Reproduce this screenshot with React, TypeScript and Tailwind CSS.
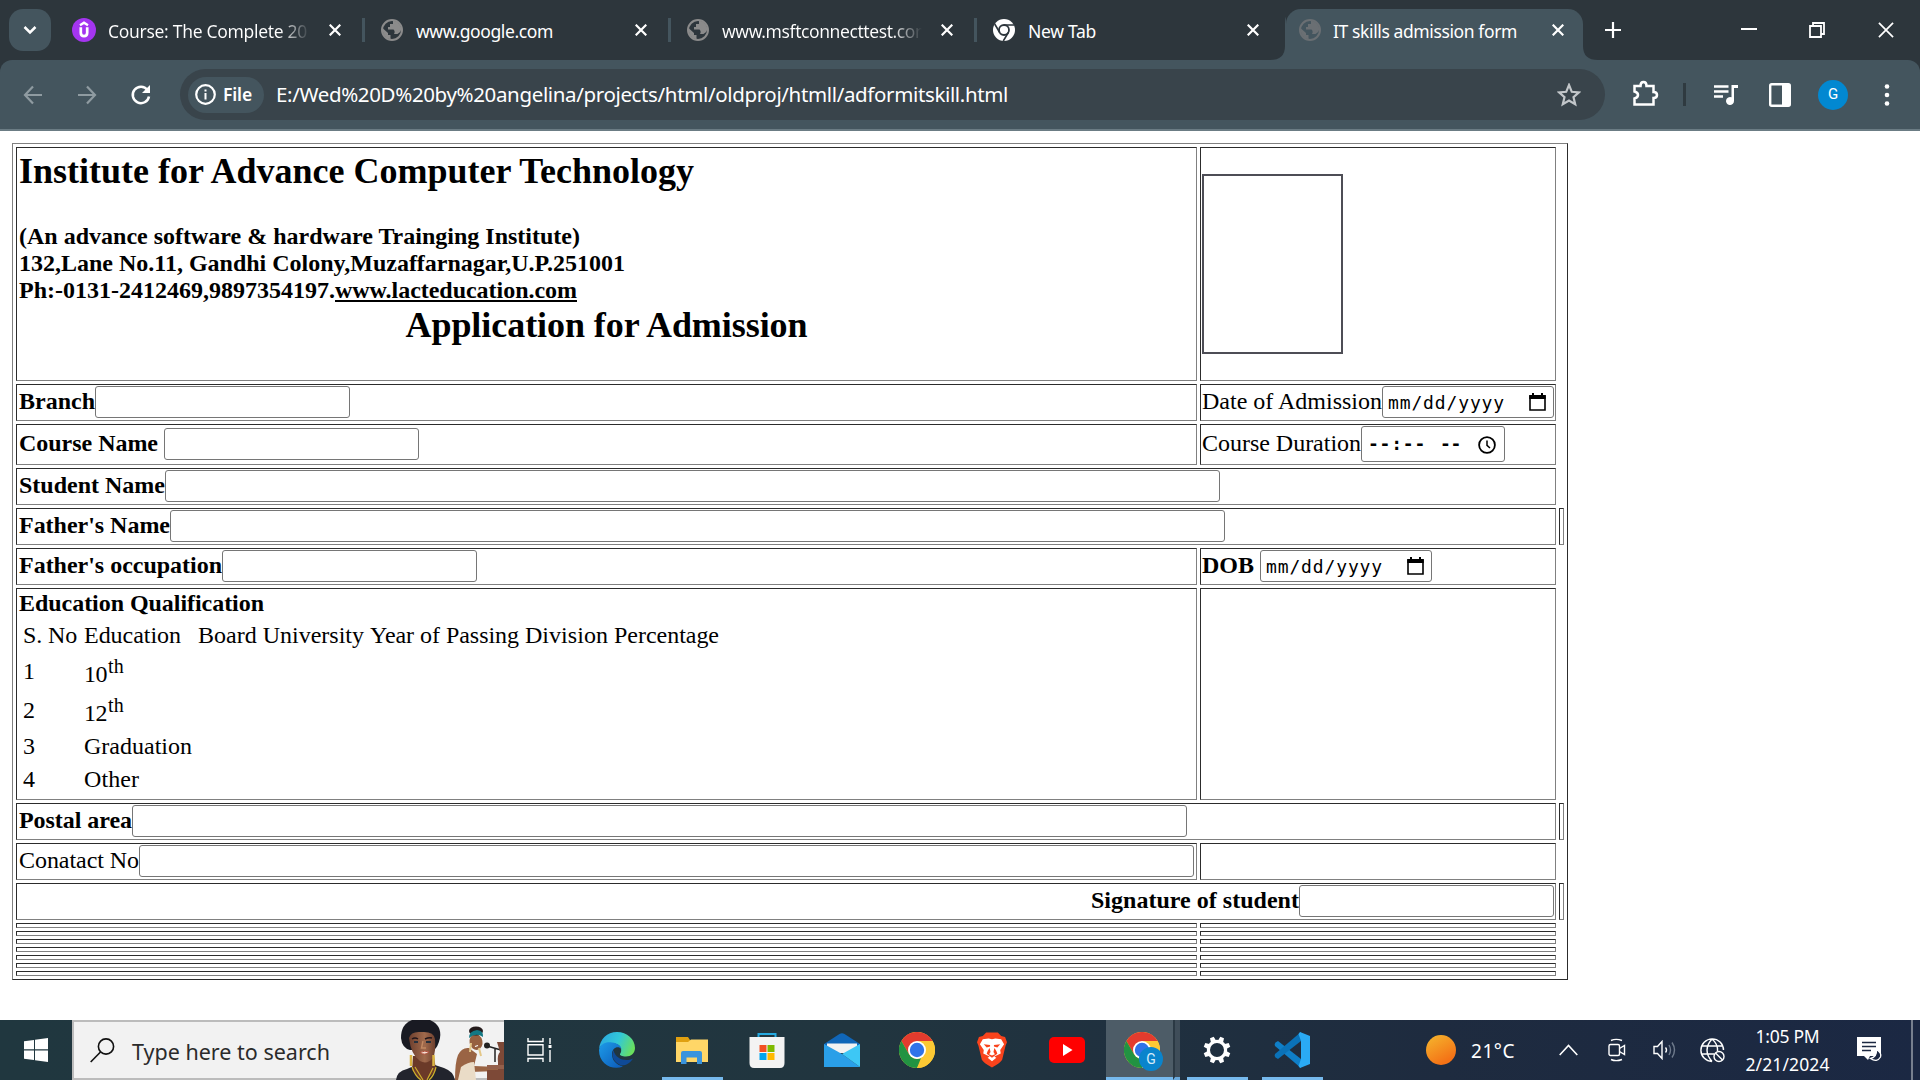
import { useLayoutEffect, useRef, useState, type ReactNode } from "react";

/** Text whose tracking is adjusted so that it spans exactly `w` pixels. */
function Fit({ w, children, className = "" }: { w: number; children: string; className?: string }) {
  const ref = useRef<HTMLSpanElement>(null);
  const [spacing, setSpacing] = useState(0);
  useLayoutEffect(() => {
    if (ref.current) {
      setSpacing((w - ref.current.getBoundingClientRect().width) / children.length);
    }
  }, [w, children]);
  return (
    <span ref={ref} className={`inline-block shrink-0 whitespace-pre ${className}`} style={{ letterSpacing: spacing }}>
      {children}
    </span>
  );
}

/* ---------- icons ---------- */

function GlobeIcon({ color }: { color: string }) {
  return (
    <svg width="22" height="22" viewBox="0 0 22 22">
      <circle cx="11" cy="11" r="10" fill="none" stroke={color} strokeWidth="2" />
      <path d="M12 1.500 V5 H9 V8 H7 V10.500 H12.500 Q14.500 12.500 13 15 H16.500 Q20 13 20.500 10 Q19 3 12 1.500 Z M2 9.500 L7 14 V16 H9.500 V20.500 Q2 18.500 1.500 10 Z" fill={color} />
    </svg>
  );
}

function CloseIcon({ size = 12, stroke = 2.2 }: { size?: number; stroke?: number }) {
  return (
    <svg width={size} height={size} viewBox="0 0 12 12" className="shrink-0">
      <path d="M.7 .7 L11.300 11.300 M11.300 .7 L.7 11.300" stroke="#fff" strokeWidth={stroke} />
    </svg>
  );
}

function UdemyIcon() {
  return (
    <svg width="24" height="24" viewBox="0 0 24 24">
      <circle cx="12" cy="12" r="12" fill="#a435f0" />
      <path d="M8 7.300 L12 4.700 L16 7.300" fill="none" stroke="#fff" strokeWidth="2.300" />
      <path d="M8.800 9.300 V14.800 Q8.800 18.200 12 18.200 Q15.200 18.200 15.200 14.800 V9.300" fill="none" stroke="#fff" strokeWidth="2.700" />
    </svg>
  );
}

function ChromeMono() {
  return (
    <svg width="22" height="22" viewBox="0 0 22 22">
      <circle cx="11" cy="11" r="11" fill="#fff" />
      <circle cx="11" cy="11" r="5" fill="none" stroke="#2d363c" strokeWidth="1.800" />
      <path d="M11 6 H21 M6.700 13.500 L1.700 5 M15.300 13.500 L10.300 22" stroke="#2d363c" strokeWidth="1.600" />
    </svg>
  );
}

function ChromeIcon() {
  return (
    <svg width="36" height="36" viewBox="0 0 36 36">
      <circle cx="18" cy="18" r="18" fill="#fcc934" />
      <path d="M18 18 L2.400 9 A18 18 0 0 1 33.600 9 Z" fill="#e33b2e" />
      <path d="M2.400 9 L10.200 22.500 L18 9 Z" fill="#e33b2e" />
      <path d="M2.400 9 L10.200 22.500 A9 9 0 0 0 22 26 L18 36 A18 18 0 0 1 2.400 9" fill="#229342" />
      <path d="M18 9 H33.600 A18 18 0 0 1 18 36 L25.800 22.500 Z" fill="#fcc934" />
      <circle cx="18" cy="18" r="9" fill="#fff" />
      <circle cx="18" cy="18" r="7.200" fill="#2f73e8" />
    </svg>
  );
}

function EdgeIcon() {
  return (
    <svg width="36" height="36" viewBox="0 0 36 36">
      <defs>
        <linearGradient id="edgeTop" x1="0" y1=".3" x2="1" y2=".6">
          <stop offset="0" stopColor="#2aa8e0" />
          <stop offset=".5" stopColor="#32c8d8" />
          <stop offset="1" stopColor="#6be05a" />
        </linearGradient>
        <linearGradient id="edgeLow" x1="0" y1="0" x2="1" y2="1">
          <stop offset="0" stopColor="#1d9be8" />
          <stop offset="1" stopColor="#0c59b8" />
        </linearGradient>
      </defs>
      <path d="M0 17 C1 7 8 0 18 0 C28 0 36 7 36 16 C36 21 32 24.500 27 24.500 C23 24.500 20.500 23.200 21 22 C23.500 19 22.500 13 16 11.500 C9 10 2 13 0 17 Z" fill="url(#edgeTop)" />
      <path d="M0 18 C1 12 7 9.500 13 10.500 C19 11.200 22 14 22.500 17 C19 13 13 16 13 22 C13 29 18 33 24 34.500 C14 38.500 0 33 0 18 Z" fill="url(#edgeLow)" />
      <path d="M14.500 18 C11.500 24 15 31 22.500 33.500 C28 33.500 32 30 34 26.500 C27 30 16.500 27.500 14.500 18 Z" fill="#0f4a97" />
    </svg>
  );
}

function ExplorerIcon() {
  return (
    <svg width="34" height="28" viewBox="0 0 34 28">
      <path d="M1 1 H13 L15 4 V8 H1 Z" fill="#e0a010" />
      <path d="M1 6 H13 L16 3.500 H33 V26 H1 Z" fill="#ffd667" />
      <path d="M6 28 V17 Q6 15 8 15 H25 Q27 15 27 17 V28 H22 V21.500 H11.500 V28 Z" fill="#3a94dd" />
    </svg>
  );
}

function StoreIcon() {
  return (
    <svg width="36" height="36" viewBox="0 0 36 36">
      <path d="M9.500 7 V2 H26.500 V7" fill="none" stroke="#25a9e0" strokeWidth="2" />
      <path d="M.5 5 H35.500 V31 Q35.500 36 31 36 H5 Q.5 36 .5 31 Z" fill="#f3f3f3" />
      <path d="M10.500 13 H17.500 V20 H10.500 Z" fill="#f25022" />
      <path d="M18.500 13 H25.500 V20 H18.500 Z" fill="#7fba00" />
      <path d="M10.500 21 H17.500 V28 H10.500 Z" fill="#00a4ef" />
      <path d="M18.500 21 H25.500 V28 H18.500 Z" fill="#ffb900" />
    </svg>
  );
}

function MailIcon() {
  return (
    <svg width="36" height="34" viewBox="0 0 36 34">
      <path d="M0 11 L15.500 1 Q18 -.5 20.500 1 L36 11 V15 H0 Z" fill="#1066b8" />
      <path d="M3 10.500 H33 V20 H3 Z" fill="#f2f2f2" />
      <path d="M0 11 L18 21 L36 34 H0 Z" fill="#2a9fe8" />
      <path d="M36 11 L18 21 L36 34 Z" fill="#3dc7f5" />
    </svg>
  );
}

function BraveIcon() {
  return (
    <svg width="30" height="36" viewBox="0 0 31 36">
      <path d="M9.500 0 H21.500 L25 3.500 L29 4.500 L31 10 L29.500 13.500 L26 28 Q24.500 31 15.500 36 Q6.500 31 5 28 L1.500 13.500 L0 10 L2 4.500 L6 3.500 Z" fill="#f9431c" />
      <path d="M6 7 L12 6 L15.500 7 L19 6 L25 7 L28 12 L24 18 L24.500 21.500 L18.500 24.500 L15.500 26.500 L12.500 24.500 L6.500 21.500 L7 18 L3 12 Z M11 26 L15.500 23.500 L20 26 L15.500 29.500 Z" fill="#fff" />
      <path d="M7 12 L13.500 12.800 L13.500 14.500 L10 15.500 Z M24 12 L17.500 12.800 L17.500 14.500 L21 15.500 Z M13 16 L14 20 L12.500 22.500 L15.500 23.800 L18.500 22.500 L17 20 L18 16 L20 19 L21 22 L15.500 26 L10 22 L11 19 Z" fill="#f9431c" />
    </svg>
  );
}

function YouTubeIcon() {
  return (
    <svg width="36" height="26" viewBox="0 0 36 26">
      <rect width="36" height="26" rx="5" fill="#f00" />
      <path d="M14 7 L23.500 13 L14 19 Z" fill="#fff" />
    </svg>
  );
}

function GearIcon() {
  return (
    <svg width="28" height="28" viewBox="-14 -14 28 28">
      {[0, 45, 90, 135, 180, 225, 270, 315].map((a) => (
        <path key={a} d="M-2.800 -8.500 L-2 -13.500 H2 L2.800 -8.500 Z" fill="#fff" transform={`rotate(${a + 22.5})`} />
      ))}
      <circle r="8.600" fill="none" stroke="#fff" strokeWidth="3.200" />
    </svg>
  );
}

function VsCodeIcon() {
  return (
    <svg width="36" height="36" viewBox="0 0 36 36">
      <path d="M1.500 10.500 L4 9 L27 27 V36 L1 14 Q0 12 1.500 10.500 Z" fill="#0f7fc8" />
      <path d="M1.500 25.500 L4 27 L27 9 V0 L1 22 Q0 24 1.500 25.500 Z" fill="#0a72b8" />
      <path d="M26 0 L36 4 V32 L26 36 L24.500 34 L27 27 V9 L24.500 2 Z" fill="#2aaaf4" />
    </svg>
  );
}

function SearchArt() {
  return (
    <svg width="108" height="60" viewBox="396 1020 108 60">
      <defs>
        <linearGradient id="face" x1="0" y1="0" x2="1" y2="0">
          <stop offset="0" stopColor="#6d3f2e" />
          <stop offset=".6" stopColor="#a06a4c" />
          <stop offset="1" stopColor="#6d3f2e" />
        </linearGradient>
      </defs>
      <path d="M396 1080 Q397 1071 407 1069 L416 1065 H435 L444 1068 Q453 1071 455 1080 Z" fill="#22242d" />
      <path d="M413 1056 H434 L436 1070 L427 1080 H421 L412 1070 Z" fill="#6b3a28" />
      <path d="M401 1038 Q401 1024 412 1020 H430 Q442 1025 440 1038 Q438 1047 434 1050 H410 Q402 1048 401 1038 Z" fill="#191a22" />
      <path d="M409 1038 Q411 1031 421 1032 Q434 1031 435 1039 Q436 1052 433 1058 Q427 1065 420 1061 Q411 1055 409 1038 Z" fill="url(#face)" />
      <path d="M412 1039 Q415 1037 418 1039 M425 1039 Q429 1037 432 1038" stroke="#20151a" strokeWidth="1.500" fill="none" />
      <path d="M414 1042 H418 M426 1042 H431" stroke="#26303c" strokeWidth="1.800" />
      <path d="M423 1041 L421.500 1048 H426" stroke="#c28962" strokeWidth="1.400" fill="none" />
      <path d="M420 1052.500 Q425 1050 429 1052 Q425 1056 420 1052.500 Z" fill="#f4dfd2" stroke="#b0503d" />
      <path d="M411 1055 V1066 M433.500 1055 V1066" stroke="#dbb544" strokeWidth="2.500" />
      <path d="M412 1067 Q415 1076 421 1080 M436 1067 Q434 1076 429 1080 M415 1067 L423 1080 M433 1068 L427 1080" stroke="#ceb02c" strokeWidth="1.200" fill="none" />
      <path d="M455 1080 Q455 1062 458 1055 Q462 1047 469 1048 L477 1054 L474 1066 L498 1067 V1071 L470 1072 L466 1080 Z" fill="#9a6444" />
      <path d="M458 1080 L461 1067 Q468 1062 474 1062 L476 1080 Z" fill="#eadcc7" />
      <ellipse cx="476" cy="1042" rx="6.500" ry="8" fill="#96603f" transform="rotate(-12 476 1042)" />
      <ellipse cx="476" cy="1031" rx="7" ry="4.500" fill="#241b1c" />
      <path d="M469 1038 Q469 1031 477 1030 Q484 1031 483 1037 Q476 1032 469 1038 Z" fill="#137883" />
      <path d="M471 1043 L470 1052 M479 1048 L481 1056" stroke="#e4c787" strokeWidth="2" />
      <path d="M475 1046.500 L478 1045.500" stroke="#fff" strokeWidth="1.300" />
      <path d="M487 1046 L501 1050 M495 1048 V1062" stroke="#222" strokeWidth="1.500" />
      <circle cx="487" cy="1045.500" r="3" fill="#222" />
      <path d="M497 1042 H504 V1080 H487 V1070 H498 V1062 Q497 1055 500 1052 Z" fill="#7d4937" />
      <path d="M487 1065 H504 V1069 H487 Z" fill="#94604b" />
    </svg>
  );
}

/* ---------- browser ---------- */

function Tab({ icon, close, children }: { icon: ReactNode; close?: boolean; children: ReactNode }) {
  return (
    <div className="flex h-[60px] w-[306px] shrink-0 items-center">
      <span className="flex w-[24px] shrink-0 justify-center">{icon}</span>
      <span className="ml-[12px] w-[202px] shrink-0 overflow-hidden pt-[1px] leading-[28px]">{children}</span>
      <span className="ml-[19px]"><CloseIcon /></span>
      {!close && <span className="ml-[21px] h-6 w-[3px] bg-[#44555e]" />}
    </div>
  );
}

function TabStrip() {
  return (
    <div className="flex h-[60px] bg-[#2d363c] text-[17.5px] text-white">
      <div className="ml-[9px] mt-[9px] flex h-[42px] w-[42px] shrink-0 items-center justify-center rounded-[14px] bg-[#44555e]">
        <svg width="14" height="10" viewBox="0 0 14 10"><path d="M1.500 2 L7 7.500 L12.500 2" fill="none" stroke="#fff" strokeWidth="2.500" /></svg>
      </div>
      <div className="ml-[21px] flex w-[1199px] shrink-0 overflow-hidden">
        <Tab icon={<UdemyIcon />}>
          <span className="block w-[202px] overflow-hidden bg-[linear-gradient(to_right,#fff_85%,#2d363c)] bg-clip-text text-transparent">
            <Fit w={199}>Course: The Complete 20</Fit>
          </span>
        </Tab>
        <Tab icon={<span className="ml-[3px]"><GlobeIcon color="#8b8b8b" /></span>}><Fit w={137} className="ml-[2px]">www.google.com</Fit></Tab>
        <Tab icon={<span className="ml-[3px]"><GlobeIcon color="#8b8b8b" /></span>}>
          <span className="block w-[202px] overflow-hidden bg-[linear-gradient(to_right,#fff_85%,#2d363c)] bg-clip-text text-transparent">
            <Fit w={209} className="ml-[2px]">www.msftconnecttest.com</Fit>
          </span>
        </Tab>
        <Tab icon={<span className="ml-[3px]"><ChromeMono /></span>} close><Fit w={68} className="ml-[2px]">New Tab</Fit></Tab>
      </div>
      <svg width="16" height="60" viewBox="0 0 16 60" className="-ml-px shrink-0"><path d="M0 60 Q15 60 15 46 V24 Q15 18 16 17 V60 Z" fill="#44555e" /></svg>
      <div className="mt-[9px] flex h-[51px] w-[297px] shrink-0 items-center rounded-t-[15px] bg-[#44555e] pb-[9px]">
        <span className="ml-[13px]"><GlobeIcon color="#6a6f73" /></span>
        <Fit w={184} className="ml-[12px] mt-[2px] leading-[28px]">IT skills admission form</Fit>
        <span className="ml-[35px]"><CloseIcon /></span>
      </div>
      <svg width="15" height="60" viewBox="0 0 15 60" className="shrink-0"><path d="M15 60 Q0 60 0 46 V60 Z" fill="#44555e" /></svg>
      <div className="flex flex-1 items-center">
        <svg width="16" height="16" viewBox="0 0 16 16" className="ml-[7px]"><path d="M8 0 V16 M0 8 H16" stroke="#fff" strokeWidth="2.200" /></svg>
        <svg width="16" height="16" viewBox="0 0 16 16" className="ml-[120px]"><path d="M0 7 H16" stroke="#fff" strokeWidth="2" /></svg>
        <svg width="16" height="16" viewBox="0 0 16 16" className="ml-[52px]"><path d="M1 4 H12 V15 H1 Z M4 4 V1 H15 V12 H12" fill="none" stroke="#fff" strokeWidth="1.800" /></svg>
        <span className="ml-[53px]"><CloseIcon size={16} stroke={1.3} /></span>
      </div>
    </div>
  );
}

function Toolbar() {
  return (
    <div className="h-[71px] border-b-2 border-[#6b7c84] bg-[#2d363c]">
      <div className="flex h-[69px] items-center rounded-t-[12px] bg-[#44555e]">
        <svg width="20" height="20" viewBox="0 0 20 20" className="ml-[23px]"><path d="M10 1.500 L2 10 L10 18.500 M2 10 H19" fill="none" stroke="#8f9ba1" strokeWidth="2.200" /></svg>
        <svg width="20" height="20" viewBox="0 0 20 20" className="ml-[34px]"><path d="M10 1.500 L18 10 L10 18.500 M18 10 H1" fill="none" stroke="#8f9ba1" strokeWidth="2.200" /></svg>
        <svg width="22" height="22" viewBox="0 0 22 22" className="ml-[33px]"><path d="M17.500 6 A8.200 8.200 0 1 0 19 12.500" fill="none" stroke="#fff" strokeWidth="2.500" /><path d="M20 1 V9 H12 Z" fill="#fff" /></svg>
        <div className="ml-[28px] flex h-[51px] w-[1425px] shrink-0 items-center rounded-full bg-[#39444b] pl-[8px] text-white">
          <div className="flex h-[36px] w-[76px] shrink-0 items-center rounded-full bg-[#44555e] pl-[7px]">
            <svg width="21" height="21" viewBox="0 0 21 21"><circle cx="10.500" cy="10.500" r="9.300" fill="none" stroke="#fff" strokeWidth="2.200" /><path d="M10.500 9 V15.500 M10.500 5.500 V7.500" stroke="#fff" strokeWidth="2" /></svg>
            <Fit w={29} className="ml-[7px] text-[17.5px] font-semibold">File</Fit>
          </div>
          <Fit w={732} className="ml-[12px] text-[20.5px]">E:/Wed%20D%20by%20angelina/projects/html/oldproj/htmll/adformitskill.html</Fit>
          <svg width="24" height="24" viewBox="0 0 24 24" className="ml-auto mr-[24px]"><path d="M12 2 L14.800 8.800 L22 9.400 L16.500 14.200 L18.200 21.300 L12 17.500 L5.800 21.300 L7.500 14.200 L2 9.400 L9.200 8.800 Z" fill="none" stroke="#c2c6c9" strokeWidth="2.200" /></svg>
        </div>
        <svg width="27" height="27" viewBox="0 0 27 27" className="-mt-[2px] ml-[27px]"><path d="M2.500 6 H8.500 Q8.500 2 11.500 2 Q14.500 2 14.500 6 H21.500 V12 Q25 12 25 15 Q25 18 21.500 18 V24.500 H2.500 V18.500 Q6 17.500 6 15 Q6 12.500 2.500 11.500 Z" fill="none" stroke="#fff" strokeWidth="2.500" /></svg>
        <div className="ml-[24px] h-[23px] w-[3px] bg-[#2f3a40]" />
        <svg width="24" height="24" viewBox="0 0 24 24" className="ml-[28px]"><path d="M0 3.500 H14.500 M0 8.500 H14.500 M0 13.500 H9" stroke="#fff" strokeWidth="2.300" /><path d="M24 2 V5 H20 V18 A4 4 0 1 1 17.500 14.300 V2 Z" fill="#fff" /></svg>
        <svg width="22" height="24" viewBox="0 0 22 24" className="ml-[31px]"><rect x="1.200" y="1.200" width="19.600" height="21.600" rx="1.500" fill="none" stroke="#fff" strokeWidth="2.400" /><path d="M13 1 H21 V23 H13 Z" fill="#fff" /></svg>
        <div className="ml-[27px] flex h-[30px] w-[30px] items-center justify-center rounded-full bg-[#0288d1] font-[Roboto] text-[15px] text-white">G</div>
        <svg width="6" height="24" viewBox="0 0 6 24" className="ml-[36px]"><circle cx="3" cy="3.500" r="2.300" fill="#fff" /><circle cx="3" cy="12" r="2.300" fill="#fff" /><circle cx="3" cy="20.500" r="2.300" fill="#fff" /></svg>
      </div>
    </div>
  );
}

/* ---------- form ---------- */

const cell = "flex items-start border border-t-[#2c2c2c] border-l-[#2c2c2c] border-b-[#808080] border-r-[#808080] pl-px leading-[32px] overflow-hidden";

function Box({ className }: { className: string }) {
  return <div className={`h-8 shrink-0 rounded-[3px] border border-[#767676] bg-white ${className}`} />;
}

function DateBox({ className = "" }: { className?: string }) {
  return (
    <div className={`mt-px flex h-8 w-[172px] shrink-0 items-center rounded-[3px] border border-[#767676] pl-[5px] pr-[7px] font-['DejaVu_Sans_Mono',monospace] text-[18px] ${className}`}>
      <Fit w={117} className="mt-px">mm/dd/yyyy</Fit>
      <svg width="17" height="18" viewBox="0 0 17 18" className="ml-auto"><path d="M1 3 H16 V17 H1 Z" fill="none" stroke="#000" strokeWidth="1.600" /><path d="M.3 2 H16.700 V6 H.3 Z M3 0 H5 V3 H3 Z M12 0 H14 V3 H12 Z" /></svg>
    </div>
  );
}

function Education() {
  const rows: [string, ReactNode, string][] = [
    ["1", <Fit key="a" w={23}>10</Fit>, "h-[39px]"],
    ["2", <Fit key="b" w={23}>12</Fit>, "h-[36px]"],
    ["3", <Fit key="c" w={108}>Graduation</Fit>, "h-[33px]"],
    ["4", <Fit key="d" w={55}>Other</Fit>, "h-[33px]"],
  ];
  return (
    <div className="mt-px leading-[27px]">
      <Fit w={246} className="pl-px font-bold">Education Qualification</Fit>
      <div className="mt-[5px] flex h-[36px] pl-[5px]">
        <Fit w={54}>S. No</Fit>
        <Fit w={97} className="ml-[7px]">Education</Fit>
        <Fit w={166} className="ml-[17px]">Board University</Fit>
        <Fit w={149} className="ml-[6px]">Year of Passing</Fit>
        <Fit w={83} className="ml-[6px]">Division</Fit>
        <Fit w={105} className="ml-[6px]">Percentage</Fit>
      </div>
      {rows.map(([n, label, h], i) => (
        <div key={n} className={`flex pl-[5px] ${h}`}>
          <span className="w-[61px]">{n}</span>
          <span className={i < 2 ? "mt-[3px]" : ""}>{label}</span>
          {i < 2 && <Fit w={16} className="-mt-[5px] ml-px text-[20px]">th</Fit>}
        </div>
      ))}
    </div>
  );
}

function AdmissionForm() {
  return (
    <div className="h-[889px] bg-white pl-3 pt-3 font-['Liberation_Serif',serif] text-[24px] text-black">
      <div className="grid h-[837px] w-[1556px] grid-cols-[1181px_356px_5px] grid-rows-[234px_37px_41px_37px_37px_37px_212px_37px_37px_37px_repeat(7,5px)] gap-[3px] border border-b-[#2c2c2c] border-l-[#808080] border-r-[#2c2c2c] border-t-[#808080] p-[3px]">
        <div className={`${cell} flex-col font-bold`}>
          <Fit w={676} className="mt-[3px] pl-px text-[36px] leading-[41px]">Institute for Advance Computer Technology</Fit>
          <Fit w={562} className="mt-[31px] pl-px leading-[27px]">(An advance software &amp; hardware Trainging Institute)</Fit>
          <Fit w={607} className="pl-px leading-[27px]">132,Lane No.11, Gandhi Colony,Muzaffarnagar,U.P.251001</Fit>
          <div className="flex leading-[27px]">
            <Fit w={317} className="pl-px">Ph:-0131-2412469,9897354197.</Fit>
            <Fit w={242} className="underline decoration-2 underline-offset-2">www.lacteducation.com</Fit>
          </div>
          <Fit w={402} className="mr-px mt-px self-center text-[36px] leading-[41px]">Application for Admission</Fit>
        </div>
        <div className={cell}>
          <div className="mt-[26px] h-[180px] w-[141px] border-2 border-[#4e4e56]" />
        </div>
        <i />

        <div className={cell}><Fit w={77} className="pl-px font-bold">Branch</Fit><Box className="mt-px w-[255px]" /></div>
        <div className={cell}><Fit w={180}>Date of Admission</Fit><DateBox /></div>
        <i />

        <div className={cell}><Fit w={140} className="mt-[2px] pl-px font-bold">Course Name</Fit><Box className="ml-[6px] mt-[3px] w-[255px]" /></div>
        <div className={cell}>
          <Fit w={159} className="mt-[2px]">Course Duration</Fit>
          <div className="mt-px flex h-[36px] w-[144px] shrink-0 items-center rounded-[3px] border border-[#767676] pl-[6px] pr-[8px] font-['DejaVu_Sans_Mono',monospace] text-[18px] font-bold">
            <Fit w={58}>--:--</Fit>
            <Fit w={21} className="ml-[14px]">--</Fit>
            <svg width="18" height="18" viewBox="0 0 18 18" className="ml-auto mt-px"><circle cx="9" cy="9" r="7.900" fill="none" stroke="#000" strokeWidth="1.800" /><path d="M9 4.500 V9.300 L12 12" fill="none" stroke="#000" strokeWidth="1.500" /></svg>
          </div>
        </div>
        <i />

        <div className={`${cell} col-span-2`}><Fit w={147} className="pl-px font-bold">Student Name</Fit><Box className="mt-px w-[1055px]" /></div>
        <i />

        <div className={`${cell} col-span-2`}><Fit w={152} className="pl-px font-bold">Father's Name</Fit><Box className="mt-px w-[1055px]" /></div>
        <div className={cell} />

        <div className={cell}><Fit w={204} className="pl-px font-bold">Father's occupation</Fit><Box className="mt-px w-[255px]" /></div>
        <div className={cell}><Fit w={52} className="font-bold">DOB</Fit><DateBox className="ml-[6px]" /></div>
        <i />

        <div className={cell}><Education /></div>
        <div className={cell} />
        <i />

        <div className={`${cell} col-span-2`}><Fit w={114} className="pl-px font-bold">Postal area</Fit><Box className="mt-px w-[1055px]" /></div>
        <div className={cell} />

        <div className={cell}><Fit w={121} className="pl-px">Conatact No</Fit><Box className="mt-px w-[1055px]" /></div>
        <div className={cell} />
        <i />

        <div className={`${cell} col-span-2 justify-end pr-px`}><Fit w={208} className="font-bold">Signature of student</Fit><Box className="mt-px w-[255px]" /></div>
        <div className={cell} />

        {[0, 1, 2, 3, 4, 5, 6].map((r) => (
          <div key={r} className="col-span-3 grid grid-cols-[1181px_356px] gap-[3px]">
            <div className={cell} />
            <div className={cell} />
          </div>
        ))}
      </div>
    </div>
  );
}

/* ---------- taskbar ---------- */

function TaskButton({ children, open, active }: { children: ReactNode; open?: boolean; active?: boolean }) {
  if (active) {
    return (
      <div className="flex w-[75px] shrink-0">
        <div className="relative -ml-px flex h-[60px] w-[67px] shrink-0 items-center justify-center border-b-[3px] border-[#76b9ed] bg-[#4d5c67] pl-[5px] pt-[3px]">
          {children}
          <span className="absolute left-[33px] top-[27px] flex h-6 w-6 items-center justify-center rounded-full bg-[#0a84cc] font-[Roboto] text-[14px] text-[#d5ecfa]">G</span>
        </div>
        <div className="h-[60px] w-[7px] shrink-0 border-b-[3px] border-l-2 border-b-[#6aa9dc] border-l-[#2b3944] bg-[#3f4d59]" />
      </div>
    );
  }
  return (
    <div className="flex w-[75px] shrink-0 flex-col items-center">
      <div className="flex h-[57px] items-center pr-[2px] pt-[3px]">{children}</div>
      {open && <div className="h-[3px] w-[61px] bg-[#76b9ed]" />}
    </div>
  );
}

function Taskbar() {
  return (
    <div className="flex h-[60px] w-[1920px] bg-[linear-gradient(to_right,#20373f,#21353f_45%,#1e2b3f_75%,#1b2843)] text-white">
      <div className="flex w-[72px] shrink-0 items-center justify-center">
        <svg width="24" height="24" viewBox="0 0 24 24"><path d="M0 3.300 L10 2 V11.300 H0 Z M11 1.800 L24 0 V11.300 H11 Z M0 12.500 H10 V22 L0 20.700 Z M11 12.500 H24 V24 L11 22.200 Z" fill="#fff" /></svg>
      </div>
      <div className="flex h-[60px] w-[432px] shrink-0 border-2 border-r-0 border-[#bcbcbc] bg-[#f2f2f2]">
        <svg width="25" height="25" viewBox="0 0 25 25" className="ml-[16px] mt-[16px]"><circle cx="16" cy="8.500" r="7.600" fill="none" stroke="#111" strokeWidth="1.600" /><path d="M10.500 14 L.7 24" stroke="#111" strokeWidth="1.600" /></svg>
        <Fit w={198} className="ml-[17px] mt-[14px] text-[21.5px] leading-[32px] text-[#2b2b2b]">Type here to search</Fit>
        <span className="-mt-[2px] ml-auto h-[60px]"><SearchArt /></span>
      </div>
      <div className="flex w-[76px] shrink-0 items-center pl-[23px]">
        <svg width="25" height="24" viewBox="0 0 25 24" fill="none" stroke="#fff" strokeWidth="1.400"><path d="M1 0 V3.500 H16 V0 M1 24 V20.500 H16 V24 M1 6.700 H16 V17 H1 Z M23 0 V6 M23 12 V24" /><path d="M21.500 7 H24.500 V10 H21.500 Z" fill="#fff" stroke="none" /></svg>
      </div>
      <TaskButton><EdgeIcon /></TaskButton>
      <TaskButton open><ExplorerIcon /></TaskButton>
      <TaskButton><StoreIcon /></TaskButton>
      <TaskButton><MailIcon /></TaskButton>
      <TaskButton><ChromeIcon /></TaskButton>
      <TaskButton><BraveIcon /></TaskButton>
      <TaskButton><YouTubeIcon /></TaskButton>
      <div className="ml-[2px] flex w-[73px] shrink-0"><TaskButton active><ChromeIcon /></TaskButton></div>
      <TaskButton open><GearIcon /></TaskButton>
      <TaskButton open><VsCodeIcon /></TaskButton>
      <div className="ml-[96px] flex items-center">
        <div className="h-[30px] w-[30px] rounded-full bg-[linear-gradient(150deg,#f5b82e,#f47216_80%)]" />
        <Fit w={44} className="ml-[15px] mt-[2px] text-[19px]">21°C</Fit>
        <svg width="19" height="12" viewBox="0 0 19 12" className="ml-[44px]"><path d="M.7 11 L9.500 1.500 L18.300 11" fill="none" stroke="#fff" strokeWidth="1.600" /></svg>
        <svg width="18" height="24" viewBox="0 0 18 24" className="ml-[30px]" fill="none" stroke="#fff" strokeWidth="1.400"><rect x="1" y="6.500" width="10.500" height="11" rx="1.500" /><path d="M11.500 10.500 L16.500 7.500 V16.500 L11.500 13.500 M3 2.500 Q8 .2 14 2.500 M3 21.500 Q8 23.800 14 21.500" /></svg>
        <svg width="24" height="20" viewBox="0 0 24 20" className="ml-[27px]" fill="none" stroke="#fff" strokeWidth="1.400"><path d="M1 6.500 H4.500 L9 1.500 V18.500 L4.500 13.500 H1 Z M12.500 7.500 Q14.500 10 12.500 12.500" /><path d="M16 5 Q19 10 16 15 M19 2.500 Q24 10 19 17.500" stroke="#6f7b8c" /></svg>
        <svg width="25" height="25" viewBox="0 0 25 25" className="ml-[23px]" fill="none" stroke="#fff" strokeWidth="1.400"><path d="M23.500 12 A11.300 11.300 0 1 0 12 23.500 M12 1 Q2 12 12 23.500 M12 1 Q18 6 17.500 13 M2 8 H22.500 M2 16 H14" /><circle cx="19" cy="18.500" r="5" /><path d="M15.500 15 L22.500 22" /></svg>
        <div className="ml-[20px] flex w-[85px] flex-col items-center text-[17.5px] leading-[28px]">
          <Fit w={64}>1:05 PM</Fit>
          <Fit w={84}>2/21/2024</Fit>
        </div>
        <svg width="26" height="26" viewBox="0 0 26 26" className="ml-[27px]"><path d="M0 0 H24 V19 H13 L11 23 L7 19 H0 Z" fill="#fff" /><path d="M5 5.500 H19 M5 9.500 H19 M5 13.500 H14" stroke="#1c2842" strokeWidth="1.400" /><path d="M19.500 12.500 Q25 16 23.500 20 Q20 26 13.500 21.500 Q20 20 19.500 12.500 Z" fill="#1c2842" stroke="#fff" strokeWidth="1.300" /></svg>
        <div className="ml-[28px] h-[60px] w-[2px] bg-[#77808f]" />
      </div>
    </div>
  );
}

export default function App() {
  return (
    <div className="h-[1080px] w-[1920px] overflow-hidden bg-white font-['Noto_Sans','Open_Sans',sans-serif]">
      <TabStrip />
      <Toolbar />
      <AdmissionForm />
      <Taskbar />
    </div>
  );
}
